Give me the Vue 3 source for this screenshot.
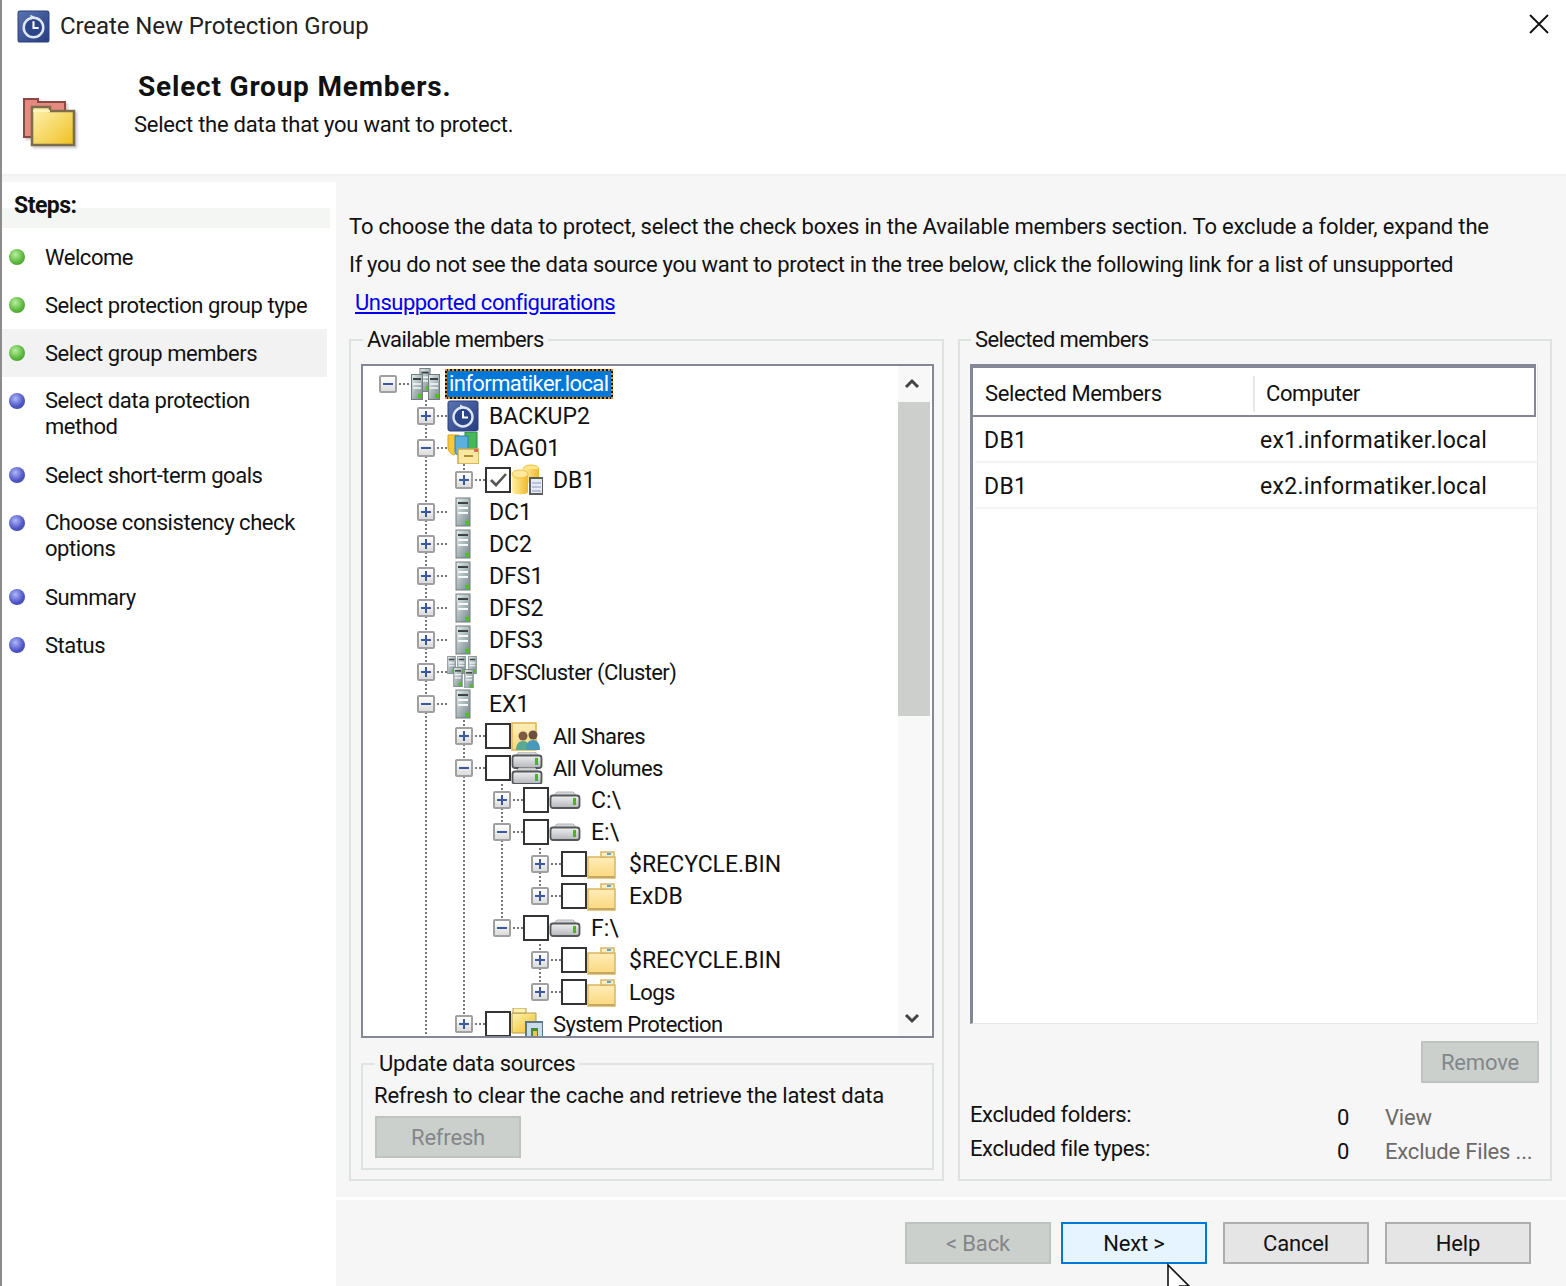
<template>
  <div class="dialog">
    <svg class="defs" aria-hidden="true">
      <defs>
        <linearGradient id="g-tower" x1="0" y1="0" x2="1" y2="1">
          <stop offset="0" stop-color="#e4ecec" />
          <stop offset="1" stop-color="#76868a" />
        </linearGradient>
        <linearGradient id="g-folder" x1="0" y1="0" x2="1" y2="1">
          <stop offset="0" stop-color="#fdf3b4" />
          <stop offset="1" stop-color="#f0c020" />
        </linearGradient>
        <linearGradient id="g-small" x1="0" y1="0" x2="0" y2="1">
          <stop offset="0" stop-color="#fdeeb8" />
          <stop offset="1" stop-color="#fbd77e" />
        </linearGradient>
        <linearGradient id="g-disk" x1="0" y1="0" x2="0" y2="1">
          <stop offset="0" stop-color="#f0f0f2" />
          <stop offset="1" stop-color="#b4b6ba" />
        </linearGradient>
        <linearGradient id="g-clock" x1="0" y1="0" x2="1" y2="1">
          <stop offset="0" stop-color="#5a74b0" />
          <stop offset="1" stop-color="#263c80" />
        </linearGradient>
        <linearGradient id="g-can" x1="0" y1="0" x2="1" y2="0">
          <stop offset="0" stop-color="#fff0a0" />
          <stop offset="1" stop-color="#f2b92c" />
        </linearGradient>
        <symbol id="i-clock" viewBox="0 0 32 32">
          <rect x="1" y="1" width="30" height="30" rx="2" fill="url(#g-clock)" stroke="#2b3f7e" />
          <circle cx="16" cy="17" r="9.5" fill="#2c4488" stroke="#dfe6f4" stroke-width="2.4" />
          <path d="M16 11v6.5h5" fill="none" stroke="#fff" stroke-width="2" />
          <path d="M13 4.5l5 2.5-5 2.5z" fill="#dfe6f4" />
        </symbol>
        <symbol id="i-server" viewBox="0 0 32 32">
          <rect x="9" y="2" width="14" height="28" fill="url(#g-tower)" stroke="#6f7c80" />
          <path d="M11 6h10v2H11z" fill="#3a4446" />
          <path d="M11 12h10M11 17h10" stroke="#f4f8f8" stroke-width="2" />
          <rect x="18" y="25" width="4" height="4" fill="#4fc21e" />
        </symbol>
        <symbol id="i-domain" viewBox="0 0 32 32">
          <use href="#i-tower-s" x="9" y="0" width="14" height="24" />
          <use href="#i-tower-s" x="1" y="6" width="14" height="26" />
          <use href="#i-tower-s" x="18" y="6" width="14" height="26" />
        </symbol>
        <symbol id="i-tower-s" viewBox="0 0 12 26">
          <rect x=".5" y=".5" width="11" height="25" fill="url(#g-tower)" stroke="#6f7c80" />
          <path d="M2 4h8v2H2z" fill="#3a4446" />
          <path d="M2 10h8M2 14h8" stroke="#f4f8f8" stroke-width="1.6" />
          <rect x="7" y="20" width="4" height="4" fill="#4fc21e" />
        </symbol>
        <symbol id="i-cluster" viewBox="0 0 32 32">
          <use href="#i-tower-s" x="0" y="0" width="9" height="18" />
          <use href="#i-tower-s" x="10" y="0" width="9" height="18" />
          <use href="#i-tower-s" x="21" y="0" width="9" height="18" />
          <use href="#i-tower-s" x="6" y="11" width="10" height="20" />
          <use href="#i-tower-s" x="17" y="13" width="10" height="20" />
        </symbol>
        <symbol id="i-dag" viewBox="0 0 32 32">
          <path d="M1 3h11v13c0 3-3 6-5 7-3-1-6-4-6-7z" fill="#f6c93a" stroke="#d9a21a" />
          <path d="M18 0h12v16c0 3-3 5-6 6-3-1-6-3-6-6z" fill="#46b85a" stroke="#2b8a3a" />
          <path d="M8 4h13v15c0 3-3 5-6 6-4-1-7-3-7-6z" fill="#5cb0de" stroke="#2c7cb0" />
          <rect x="11" y="17" width="21" height="15" fill="#fbe79e" stroke="#c9aa4c" stroke-width="1.5" />
          <path d="M17 24h9" stroke="#b09030" stroke-width="2" />
          <rect x="27" y="17" width="4" height="3" fill="#e2685a" />
        </symbol>
        <symbol id="i-db" viewBox="0 0 32 32">
          <ellipse cx="20" cy="5" rx="8" ry="4" fill="#fde68a" stroke="#f0c040" />
          <path d="M12 5v14h16V5z" fill="url(#g-can)" />
          <path d="M1 10v18c0 3 16 3 16 0V10z" fill="url(#g-can)" />
          <ellipse cx="9" cy="10" rx="8" ry="4" fill="#fee99c" stroke="#f0c040" />
          <rect x="19" y="14" width="13" height="16" fill="#e6eaf4" stroke="#5c5c5c" stroke-width="2" />
          <path d="M21 19h9M21 23h9M21 27h9" stroke="#aab4d0" stroke-width="1.5" />
        </symbol>
        <symbol id="i-shares" viewBox="0 0 32 32">
          <rect x="1" y="3" width="24" height="27" fill="url(#g-small)" stroke="#dfb24c" stroke-width="1.5" />
          <circle cx="12" cy="16" r="4.5" fill="#7a5a42" />
          <path d="M5 30c0-6 3-9 7-9s7 3 7 9z" fill="#5aa890" />
          <circle cx="22" cy="15" r="4.5" fill="#6a5040" />
          <path d="M15 30c0-7 3-10 7-10s7 3 7 10z" fill="#4a98b8" />
        </symbol>
        <symbol id="i-disk-s" viewBox="0 0 32 18">
          <path d="M4 5l4-4h16l4 4z" fill="#d4d6d8" stroke="#b4b4b4" />
          <rect x="1.5" y="4.5" width="29" height="12.5" rx="2.5" fill="url(#g-disk)" stroke="#55585a" stroke-width="1.8" />
          <rect x="24" y="7" width="3" height="7" fill="#4fb02a" />
        </symbol>
        <symbol id="i-volumes" viewBox="0 0 32 32">
          <use href="#i-disk-s" x="0" y="-1" width="32" height="18" />
          <use href="#i-disk-s" x="0" y="15" width="32" height="18" />
        </symbol>
        <symbol id="i-disk" viewBox="0 0 32 32">
          <use href="#i-disk-s" x="0" y="7" width="32" height="18" />
        </symbol>
        <symbol id="i-folder" viewBox="0 0 32 32">
          <path d="M1 9h27v21H1z" fill="url(#g-small)" stroke="#dbb563" stroke-width="1.5" />
          <path d="M14 9V4h13v5z" fill="#fdf0c6" stroke="#dbb563" stroke-width="1.5" />
          <rect x="20" y="5" width="4" height="2" fill="#4aa8e8" />
          <path d="M2 30h26V28H2z" fill="#c4a860" />
        </symbol>
        <symbol id="i-sysprot" viewBox="0 0 32 32">
          <path d="M1 5h24v20H1z" fill="url(#g-folder)" stroke="#b49a50" />
          <path d="M2 5V0h13v5z" fill="#fdf0b0" stroke="#b49a50" />
          <rect x="15" y="14" width="17" height="18" fill="#c8dcec" stroke="#5a7a8a" stroke-width="2" />
          <rect x="20" y="20" width="7" height="12" fill="#4a8a3a" />
          <rect x="22" y="23" width="4" height="9" fill="#e8c84a" />
        </symbol>
      </defs>
    </svg>

    <div class="titlebar">
      <svg class="title-icon"><use href="#i-clock" /></svg>
      <span class="title-text">Create New Protection Group</span>
      <svg class="close" viewBox="0 0 20 20">
        <path d="M1 1l18 18M19 1L1 19" stroke="#111" stroke-width="1.8" fill="none" />
      </svg>
    </div>

    <header class="page-head">
      <svg class="head-icon" viewBox="0 0 54 50">
        <path d="M1 2h14v3h27v35H1z" fill="#e58a80" stroke="#8a4a44" stroke-width="2" />
        <path d="M9 14v-4h18v4h24v34H9z" fill="url(#g-folder)" stroke="#7c6e4c" stroke-width="2.6" />
        <path d="M10 14h17" stroke="#fff4c0" stroke-width="2" />
      </svg>
      <div class="head-text">
        <h1>Select Group Members.</h1>
        <p>Select the data that you want to protect.</p>
      </div>
    </header>

    <div class="body">
      <aside class="steps">
        <div class="steps-title"><span>Steps:</span></div>
        <ul>
          <li
            v-for="step in steps"
            :key="step.label"
            :class="{ current: step.current, tall: step.tall }"
          >
            <i class="dot" :class="step.done ? 'green' : 'blue'"></i>
            <span>{{ step.label }}</span>
          </li>
        </ul>
      </aside>

      <main class="main">
        <div class="content">
          <div class="intro">
            <p>To choose the data to protect, select the check boxes in the Available members section. To exclude a folder, expand the</p>
            <p class="tight">If you do not see the data source you want to protect in the tree below, click the following link for a list of unsupported</p>
            <a class="link">Unsupported configurations</a>
          </div>

          <div class="columns">
            <fieldset class="group left">
              <legend>Available members</legend>
              <div class="tree">
                <div class="rows">
                  <div
                    v-for="row in rows"
                    :key="row.id"
                    class="row"
                    :style="{ paddingLeft: 16 + 38 * row.level + 'px' }"
                  >
                    <i
                      v-for="g in row.guides"
                      :key="g.level"
                      class="guide"
                      :class="{ half: g.half }"
                      :style="{ left: 24 + 38 * g.level + 'px' }"
                    ></i>
                    <i class="expander" :class="{ open: row.open }"></i>
                    <i class="connector"></i>
                    <i v-if="row.check !== undefined" class="check">
                      <svg v-if="row.check" viewBox="0 0 22 22">
                        <path d="M4 11l5 5L19 5" fill="none" stroke="#555" stroke-width="2.6" />
                      </svg>
                    </i>
                    <svg class="ico"><use :href="'#i-' + row.icon" /></svg>
                    <span class="label" :class="{ selected: row.level === 0, caps: row.caps }">{{ row.label }}</span>
                  </div>
                </div>
                <div class="scrollbar">
                  <div class="arrow">
                    <svg viewBox="0 0 16 12"><path d="M2 9l6-6 6 6" fill="none" stroke="#444" stroke-width="3" /></svg>
                  </div>
                  <div class="thumb"></div>
                  <div class="track"></div>
                  <div class="arrow">
                    <svg viewBox="0 0 16 12"><path d="M2 3l6 6 6-6" fill="none" stroke="#444" stroke-width="3" /></svg>
                  </div>
                </div>
              </div>

              <fieldset class="group update">
                <legend>Update data sources</legend>
                <p>Refresh to clear the cache and retrieve the latest data</p>
                <button class="btn off refresh">Refresh</button>
              </fieldset>
            </fieldset>

            <fieldset class="group right">
              <legend>Selected members</legend>
              <div class="list">
                <div class="list-head">
                  <span class="col-a">Selected Members</span>
                  <span class="col-b">Computer</span>
                </div>
                <div v-for="m in members" :key="m.computer" class="list-row">
                  <span class="cell-a">{{ m.name }}</span>
                  <span class="cell-b">{{ m.computer }}</span>
                </div>
              </div>
              <div class="remove-row">
                <button class="btn off remove">Remove</button>
              </div>
              <div class="excluded">
                <div class="ex-row">
                  <span class="ex-label">Excluded folders:</span>
                  <span class="ex-count">0</span>
                  <span class="ex-link">View</span>
                </div>
                <div class="ex-row">
                  <span class="ex-label">Excluded file types:</span>
                  <span class="ex-count">0</span>
                  <span class="ex-link">Exclude Files ...</span>
                </div>
              </div>
            </fieldset>
          </div>
        </div>

        <footer class="footer">
          <button class="btn off">&lt; Back</button>
          <button class="btn next">Next &gt;</button>
          <button class="btn cancel">Cancel</button>
          <button class="btn">Help</button>
        </footer>
      </main>
    </div>

    <svg class="cursor" viewBox="0 0 24 24">
      <path d="M1 1v30L8 24l5 10 5-2-5-10h9z" fill="#fff" stroke="#111" stroke-width="1.6" />
    </svg>
  </div>
</template>

<script setup>
const steps = [
  { label: "Welcome", done: true },
  { label: "Select protection group type", done: true },
  { label: "Select group members", done: true, current: true },
  { label: "Select data protection method", tall: true },
  { label: "Select short-term goals" },
  { label: "Choose consistency check options", tall: true },
  { label: "Summary" },
  { label: "Status" },
];

const members = [
  { name: "DB1", computer: "ex1.informatiker.local" },
  { name: "DB1", computer: "ex2.informatiker.local" },
];

const folder = (label) => ({ label, icon: "folder", check: false });

const tree = {
  label: "informatiker.local",
  icon: "domain",
  open: true,
  children: [
    { label: "BACKUP2", icon: "clock" },
    {
      label: "DAG01",
      icon: "dag",
      open: true,
      children: [{ label: "DB1", icon: "db", check: true }],
    },
    { label: "DC1", icon: "server" },
    { label: "DC2", icon: "server" },
    { label: "DFS1", icon: "server" },
    { label: "DFS2", icon: "server" },
    { label: "DFS3", icon: "server" },
    { label: "DFSCluster (Cluster)", icon: "cluster" },
    {
      label: "EX1",
      icon: "server",
      open: true,
      more: true,
      children: [
        { label: "All Shares", icon: "shares", check: false },
        {
          label: "All Volumes",
          icon: "volumes",
          check: false,
          open: true,
          children: [
            { label: "C:\\", icon: "disk", check: false },
            {
              label: "E:\\",
              icon: "disk",
              check: false,
              open: true,
              children: [folder("$RECYCLE.BIN"), folder("ExDB")],
            },
            {
              label: "F:\\",
              icon: "disk",
              check: false,
              open: true,
              children: [folder("$RECYCLE.BIN"), folder("Logs")],
            },
          ],
        },
        { label: "System Protection", icon: "sysprot", check: false },
      ],
    },
  ],
};

// flatten the tree and work out which dotted lines pass through each row
const rows = [];
function walk(node, level, passing, hasNext) {
  const guides = passing.map((l) => ({ level: l, half: false }));
  if (level > 0) guides.push({ level, half: !hasNext });
  const caps = /^[^a-z]*$/.test(node.label) || node.label === "ExDB";
  rows.push({ ...node, id: rows.length, level, guides, caps });
  const kids = node.children || [];
  const nextPassing = level > 0 && hasNext ? [...passing, level] : passing;
  kids.forEach((kid, i) => {
    walk(kid, level + 1, nextPassing, i < kids.length - 1 || !!kid.more);
  });
}
walk(tree, 0, [], false);
</script>

<style scoped>
.dialog {
  position: relative;
  width: 1566px;
  height: 1286px;
  overflow: hidden;
  background: #fff;
  border-left: 2px solid #8c8c8c;
  box-sizing: border-box;
  font-family: Roboto, "Liberation Sans", sans-serif;
  font-size: 22px;
  letter-spacing: -0.18px;
  color: #111;
}
.defs {
  position: absolute;
  width: 0;
  height: 0;
}
.titlebar {
  display: flex;
  align-items: center;
  height: 52px;
  padding-left: 15px;
  padding-right: 17px;
}
.title-icon {
  width: 33px;
  height: 33px;
}
.title-text {
  margin-left: 10px;
  font-size: 24px;
  letter-spacing: -0.08px;
  color: #222;
}
.close {
  width: 20px;
  height: 20px;
  margin-left: auto;
  margin-top: -4px;
}
.page-head {
  display: flex;
  height: 124px;
  border-bottom: 2px solid #f2f2f2;
  box-sizing: border-box;
}
.head-icon {
  width: 54px;
  height: 50px;
  margin: 45px 0 0 21px;
  overflow: visible;
  filter: drop-shadow(2px 2px 1px #ccc);
}
.head-text {
  margin-left: 57px;
}
.head-text h1 {
  margin: 16px 0 0 4px;
  font-size: 28px;
  line-height: 38px;
  font-weight: 700;
  letter-spacing: 0.8px;
}
.head-text p {
  margin: 1px 0 0;
  line-height: 36px;
  letter-spacing: -0.25px;
}
.body {
  display: flex;
  height: 1110px;
  padding-top: 6px;
  box-sizing: border-box;
  background: linear-gradient(#f6f6f6 6px, #fff 6px);
}
.steps {
  width: 328px;
  flex: none;
}
.steps-title {
  height: 46px;
  background: linear-gradient(#fff 26px, #f3f6f3 26px);
  padding-left: 12px;
  font-weight: 700;
  font-size: 23px;
  line-height: 48px;
  letter-spacing: -0.5px;
}
.steps ul {
  list-style: none;
  margin: 5px 0 0;
  padding: 0;
  letter-spacing: -0.45px;
}
.steps li {
  display: flex;
  height: 48px;
  align-items: center;
  box-sizing: border-box;
  margin-right: 3px;
}
.steps li.tall {
  height: 74px;
  line-height: 26px;
  padding-right: 10px;
}
.steps li.current {
  background: #f2f2f2;
}
.dot {
  flex: none;
  width: 16px;
  height: 16px;
  margin: 0 20px 0 7px;
  border-radius: 50%;
}
.steps li.tall .dot {
  align-self: flex-start;
  margin-top: 16px;
}
.dot.green {
  background: radial-gradient(circle at 40% 35%, #b8f0a0, #5cb83c 55%, #3c8a28);
}
.dot.blue {
  background: radial-gradient(circle at 40% 35%, #b0b8f8, #5058c8 55%, #343c98);
}
.main {
  flex: 1;
  margin-left: 6px;
  display: flex;
  flex-direction: column;
  min-width: 0;
}
.content {
  height: 1015px;
  background: #f6f6f6;
  padding: 26px 14px 0 13px;
  box-sizing: border-box;
}
.intro {
  height: 119px;
}
.intro p {
  margin: 0;
  height: 38px;
  line-height: 38px;
  white-space: nowrap;
}
.intro p.tight {
  letter-spacing: -0.33px;
}
.link {
  display: block;
  margin-left: 6px;
  line-height: 38px;
  letter-spacing: -0.5px;
  color: #0000ee;
  text-decoration: underline;
}
.columns {
  display: flex;
  gap: 14px;
  height: 854px;
}
.group {
  margin: 0;
  padding: 0;
  border: 2px solid #dfe3e0;
  box-sizing: border-box;
  min-width: 0;
}
.group legend {
  margin-left: 2px;
  padding: 0 4px;
  line-height: 26px;
  letter-spacing: -0.6px;
}
.group.left {
  width: 595px;
  padding: 0 8px 0 10px;
}
.group.right {
  width: 594px;
  padding: 0 12px 0 10px;
}
.group.right legend {
  margin-left: 1px;
}
.tree {
  display: flex;
  height: 674px;
  margin-top: 11px;
  border: 2px solid #848894;
  background: #fff;
  box-sizing: border-box;
  overflow: hidden;
}
.rows {
  flex: 1;
  padding-top: 2px;
  min-width: 0;
}
.row {
  position: relative;
  display: flex;
  align-items: center;
  height: 32px;
  white-space: nowrap;
}
.guide {
  position: absolute;
  top: 0;
  bottom: 0;
  width: 2px;
  background: repeating-linear-gradient(#777 0 2px, transparent 2px 4px);
}
.guide.half {
  bottom: 50%;
}
.expander {
  position: relative;
  flex: none;
  width: 18px;
  height: 18px;
  box-sizing: border-box;
  border: 2px solid #a0a0a0;
  border-radius: 2px;
  background: linear-gradient(#fff, #dcdcdc);
}
.expander::before,
.expander:not(.open)::after {
  content: "";
  position: absolute;
  background: #3a5a9c;
}
.expander::before {
  left: 2px;
  right: 2px;
  top: 6px;
  height: 2px;
}
.expander:not(.open)::after {
  top: 2px;
  bottom: 2px;
  left: 6px;
  width: 2px;
}
.connector {
  flex: none;
  width: 12px;
  height: 2px;
  background: repeating-linear-gradient(90deg, transparent 0 2px, #777 2px 4px);
}
.check {
  flex: none;
  width: 26px;
  height: 26px;
  box-sizing: border-box;
  border: 2px solid #333;
  background: #fff;
  position: relative;
  z-index: 1;
}
.check svg {
  display: block;
  width: 22px;
  height: 22px;
}
.ico {
  flex: none;
  width: 32px;
  height: 32px;
  overflow: visible;
  position: relative;
  z-index: 1;
}
.label {
  margin-left: 10px;
  letter-spacing: -0.6px;
}
.label.caps {
  font-size: 23px;
  letter-spacing: 0;
}
.label.selected {
  margin-left: 6px;
  padding: 0 3px 0 2px;
  line-height: 26px;
  background: #0078d7;
  color: #fff;
  outline: 2px dotted #f08a00;
  box-shadow: 0 0 0 2px #111;
}
.scrollbar {
  flex: none;
  display: flex;
  flex-direction: column;
  width: 32px;
  margin-right: 2px;
  background: #f8f8f8;
}
.arrow {
  flex: none;
  height: 36px;
  display: flex;
  align-items: center;
  justify-content: center;
  padding-right: 4px;
}
.arrow svg {
  width: 16px;
  height: 12px;
}
.thumb {
  flex: none;
  height: 314px;
  background: #cdcfcd;
}
.track {
  flex: 1;
}
.update {
  height: 119px;
  margin-top: 13px;
  padding: 0 11px;
}
.update legend {
  margin-left: 1px;
  letter-spacing: -0.3px;
}
.update p {
  margin: 4px 0 0;
  line-height: 30px;
  white-space: nowrap;
}
.btn {
  flex: none;
  width: 146px;
  height: 42px;
  box-sizing: border-box;
  border: 2px solid #adadad;
  background: #e5e5e5;
  font: inherit;
  letter-spacing: inherit;
  color: #111;
  padding: 0;
}
.btn.off {
  background: #ccd0cc;
  border-color: #bfc3bf;
  color: #83878a;
}
.btn.next {
  background: #e5f4fe;
  border-color: #0078d7;
}
.btn.refresh {
  display: block;
  margin: 5px 0 0 1px;
}
.btn.remove {
  width: 118px;
}
.list {
  height: 660px;
  margin-top: 11px;
  background: #fff;
  border: 1px solid #e6e6e6;
  border-top: 0;
  border-left: 3px solid #848894;
  box-sizing: border-box;
}
.list-head {
  display: flex;
  align-items: center;
  height: 53px;
  margin-right: 1px;
  padding-top: 4px;
  border-top: 4px solid #848894;
  border-right: 2px solid #848894;
  border-bottom: 2px solid #848894;
  box-sizing: border-box;
  letter-spacing: -0.4px;
}
.col-a {
  width: 282px;
  height: 36px;
  line-height: 36px;
  padding-left: 12px;
  box-sizing: border-box;
  border-right: 2px solid #e8e8e8;
}
.col-b {
  padding-left: 11px;
}
.list-row {
  display: flex;
  align-items: center;
  height: 46px;
  padding-top: 3px;
  margin-left: 2px;
  border-bottom: 2px solid #f4f4f4;
  box-sizing: border-box;
  font-size: 23px;
  letter-spacing: 0.3px;
}
.cell-a {
  width: 285px;
  padding-left: 9px;
  box-sizing: border-box;
}
.excluded {
  margin-top: 15px;
}
.remove-row {
  display: flex;
  justify-content: flex-end;
  margin-top: 17px;
  margin-right: -1px;
}
.ex-row {
  display: flex;
  align-items: flex-start;
  height: 34px;
  line-height: 34px;
}
.ex-label {
  flex: none;
  width: 367px;
  white-space: nowrap;
  letter-spacing: -0.4px;
}
.ex-count {
  flex: none;
  width: 48px;
  margin-top: 3px;
}
.ex-link {
  margin-top: 3px;
  color: #6a6a6a;
  white-space: nowrap;
}
.footer {
  flex: 1;
  display: flex;
  align-items: flex-start;
  padding: 22px 0 0 569px;
  margin-top: 3px;
  background: #f6f6f6;
}
.footer .btn {
  margin-right: 16px;
}
.footer .btn:first-child {
  margin-right: 10px;
}
.cursor {
  position: absolute;
  left: 1165px;
  top: 1264px;
  width: 24px;
  height: 24px;
  overflow: visible;
}
</style>
